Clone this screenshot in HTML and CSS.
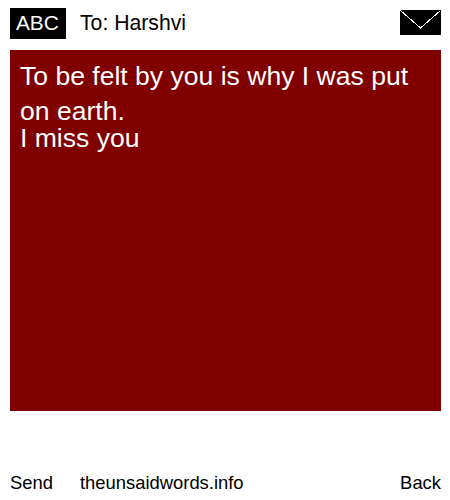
FILE: index.html
```html
<!DOCTYPE html>
<html>
<head>
<meta charset="utf-8">
<title>The Unsaid Words</title>
<link rel="stylesheet" href="styles.css">
</head>
<body>
<div class="page">
  <header class="top">
    <span class="abc">ABC</span>
    <span class="to">To: Harshvi</span>
    <svg class="mail" width="41" height="25" viewBox="0 0 41 25"><rect width="41" height="25" fill="#000"/><path d="M0.5 0.5 L20.5 18 L40.5 0.5" fill="none" stroke="#fff" stroke-width="1" shape-rendering="crispEdges"/></svg>
  </header>
  <main class="message">To be felt by you is why I was put on earth.<span class="second">I miss you</span></main>
  <footer class="bottom">
    <span class="send">Send</span>
    <span class="site">theunsaidwords.info</span>
    <span class="back">Back</span>
  </footer>
</div>
</body>
</html>
```
FILE: styles.css
```css
html, body { margin: 0; padding: 0; background: #fff; }
body { font-family: "Liberation Sans", Arial, sans-serif; color: #000; }
.page { width: 450px; height: 500px; box-sizing: border-box; padding: 8px 9px 0 10px; display: flex; flex-direction: column; }
.top { display: flex; align-items: flex-start; height: 31px; font-size: 21.2px; line-height: 30px; }
.abc { background: #000; color: #fff; width: 56px; height: 31px; box-sizing: border-box; padding-left: 6px; font-size: 20.8px; }
.to { margin-left: 14px; flex: 1; }
.mail { display: block; margin-top: 2px; }
.message { margin-top: 11px; height: 361px; background: #800000; color: #fff; font-size: 26.56px; line-height: 35px; padding: 9px 10px 0 10px; box-sizing: border-box; }
.second { display: block; line-height: 26px; margin-top: -4px; }
.bottom { margin-top: 60px; display: flex; font-size: 18.4px; line-height: 24px; }
.send { width: 70px; }
.site { flex: 1; }
.back { text-align: right; }
```
